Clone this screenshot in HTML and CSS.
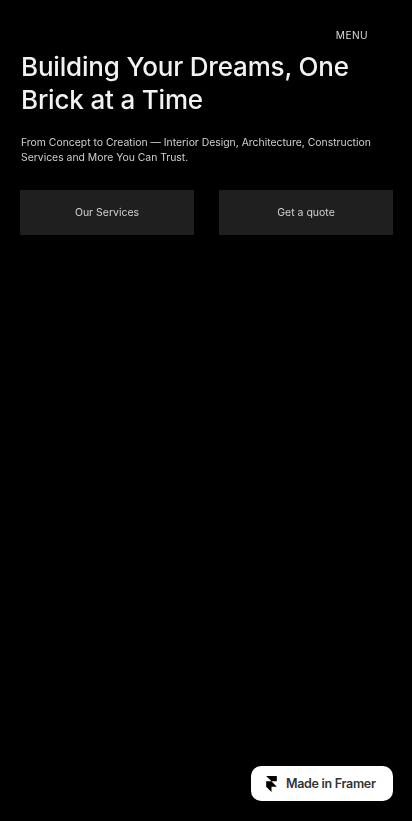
FILE: index.html
```html
<!DOCTYPE html>
<html lang="en">
<head>
  <meta charset="UTF-8" />
  <title>Building Your Dreams</title>
  <link rel="stylesheet" href="styles.css">
</head>
<body>

<div class="page">
  <div class="nav">
    <a class="menu" href="#">MENU</a>
  </div>

  <div class="hero">
    <h1>Building Your Dreams, One Brick at a Time</h1>
    <p>From Concept to Creation — Interior Design, Architecture, Construction Services and More You Can Trust.</p>
    <div class="actions">
      <a class="btn" href="#">Our Services</a>
      <a class="btn" href="#">Get a quote</a>
    </div>
  </div>
</div>

<!-- badge -->
<a class="badge" href="#">
  <svg class="badge-logo" width="11" height="16" viewBox="0 0 12 18" aria-hidden="true">
    <path d="M0 0h12v6H6L0 0zM0 6h6l6 6H6v6l-6-6V6z" fill="#000"/>
  </svg>
  <span>Made in Framer</span>
</a>

</body>
</html>
```

FILE: styles.css
```css
body {
  margin: 0;
  background-color: #000;
  color: #fff;
  font-family: Inter, "Liberation Sans", sans-serif;
}

.page {
  height: 821px;
  overflow: hidden;
  filter: blur(0.4px);
}

.nav {
  display: flex;
  justify-content: flex-end;
  padding: 29px 44px 0 0;
}

.menu {
  color: #d8d8d8;
  font-size: 10.2px;
  line-height: 13px;
  letter-spacing: 0.4px;
  text-decoration: none;
}

.hero {
  padding: 8px 19px 0 21px;
}

.hero h1 {
  margin: 0;
  font-size: 26px;
  line-height: 33px;
  font-weight: 500;
  letter-spacing: -0.18px;
  color: #f2f2f2;
}

.hero p {
  margin: 19px 0 0;
  font-size: 10.4px;
  line-height: 15px;
  color: #cfcfcf;
}

.actions {
  display: flex;
  gap: 25px;
  margin: 25px 0 0 -1px;
}

.btn {
  flex: 1;
  height: 45px;
  display: flex;
  align-items: center;
  justify-content: center;
  background-color: #1f1f1f;
  color: #d0d0d0;
  font-size: 10.5px;
  text-decoration: none;
}

.badge {
  position: fixed;
  right: 19px;
  bottom: 20px;
  width: 142px;
  height: 35px;
  box-sizing: border-box;
  padding-left: 15px;
  display: flex;
  align-items: center;
  gap: 9px;
  background-color: #fff;
  border-radius: 10px;
  color: #333;
  font-size: 12.5px;
  font-weight: 600;
  letter-spacing: -0.3px;
  text-decoration: none;
}

.badge-logo {
  flex-shrink: 0;
}
```
